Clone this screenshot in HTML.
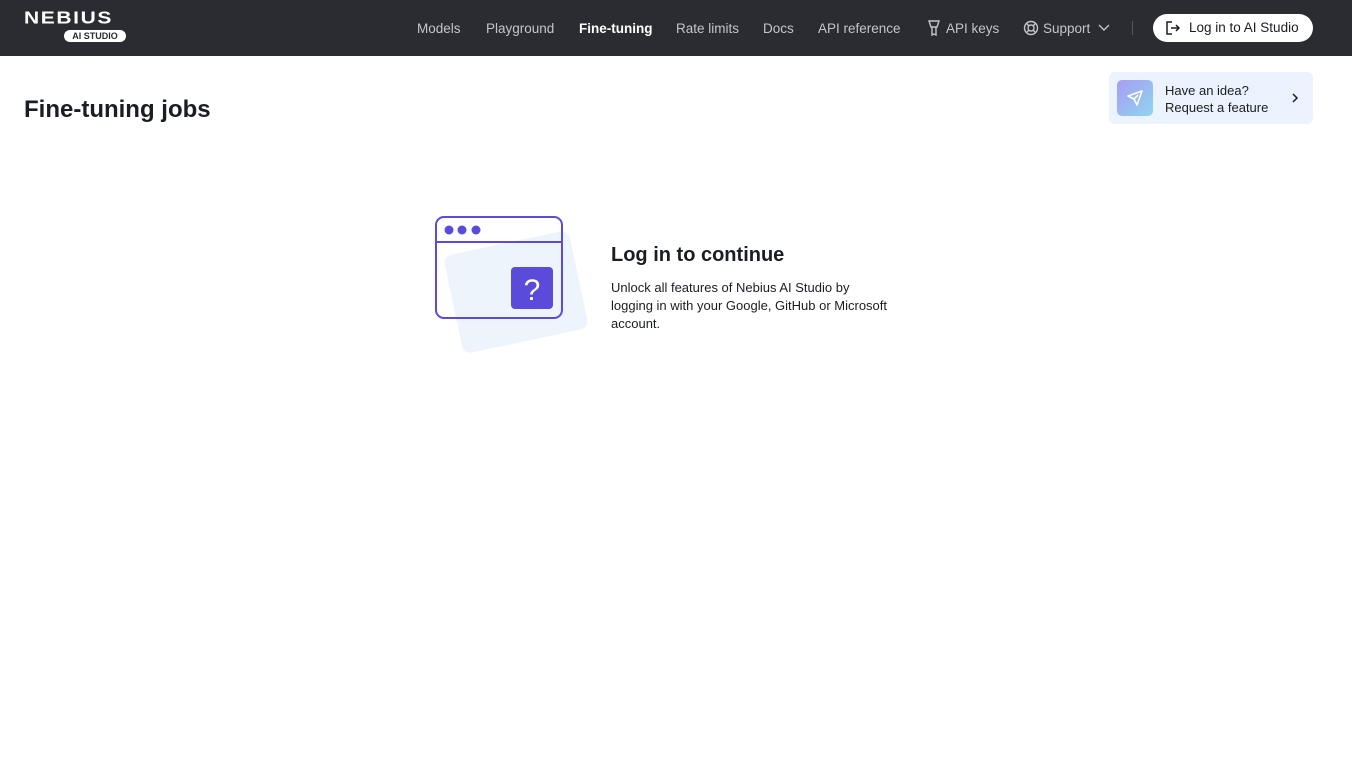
<!DOCTYPE html>
<html><head><meta charset="utf-8"><style>
*{margin:0;padding:0;box-sizing:border-box}
body{width:1352px;height:760px;background:#fff;font-family:"Liberation Sans",sans-serif;position:relative;overflow:hidden;color:#1b1d24}
.top{position:absolute;left:0;top:0;width:1352px;height:56px;background:#2b2c31}
.nav{position:absolute;top:21px;font-size:13.5px;color:#c4c5ca;white-space:nowrap}
.nav.a{color:#fff;font-weight:bold}
.btn{position:absolute;left:1153px;top:14px;width:160px;height:28px;background:#fff;border-radius:14px;font-size:13.5px;color:#1b1d24}
h1{position:absolute;left:24px;top:96px;font-size:24px;font-weight:bold;color:#1b1d24}
.card{position:absolute;left:1109px;top:72px;width:204px;height:52px;background:#eaf3fe;border-radius:6px}
</style></head><body>
<div class="top">
<div style="position:absolute;left:24px;top:11px;color:#fff;font-weight:bold;font-size:21px;letter-spacing:1.6px;line-height:18px;transform:scaleY(0.82);transform-origin:top left">NEBIUS</div>
<div style="position:absolute;left:64px;top:30px;width:62px;height:12px;background:#fff;border-radius:6px;color:#2b2c31;font-size:9px;font-weight:bold;text-align:center;line-height:12px">AI STUDIO</div>
<div class="nav" style="left:417px">Models</div>
<div class="nav" style="left:486px">Playground</div>
<div class="nav a" style="left:579px">Fine-tuning</div>
<div class="nav" style="left:676px">Rate limits</div>
<div class="nav" style="left:763px">Docs</div>
<div class="nav" style="left:818px">API reference</div>
<svg style="position:absolute;left:927px;top:20px" width="14" height="16" viewBox="0 0 14 16" fill="none" stroke="#c4c5ca" stroke-width="1.4"><path d="M2 1h10l-2 6H4z M5 7v8l2-1 2 1V7"/></svg>
<div class="nav" style="left:946px">API keys</div>
<svg style="position:absolute;left:1023px;top:20px" width="16" height="16" viewBox="0 0 16 16" fill="none" stroke="#c4c5ca" stroke-width="1.4"><circle cx="8" cy="8" r="6.5"/><circle cx="8" cy="8" r="3"/><path d="M3.5 3.5l2.4 2.4M12.5 3.5l-2.4 2.4M3.5 12.5l2.4-2.4M12.5 12.5l-2.4-2.4"/></svg>
<div class="nav" style="left:1043px">Support</div>
<svg style="position:absolute;left:1098px;top:23px" width="12" height="10" viewBox="0 0 12 10" fill="none" stroke="#c4c5ca" stroke-width="1.4"><path d="M1 2l5 5 5-5"/></svg>
<div style="position:absolute;left:1132px;top:21px;width:1px;height:14px;background:#55565c"></div>
<div class="btn"><svg style="position:absolute;left:12px;top:6px" width="16" height="16" viewBox="0 0 16 16" fill="none" stroke="#1b1d24" stroke-width="1.5"><path d="M7 2H2v12h5M6 8h8M11 5l3 3-3 3"/></svg><span style="position:absolute;left:36px;top:6px">Log in to AI Studio</span></div>
</div>
<h1>Fine-tuning jobs</h1>
<div class="card">
<div style="position:absolute;left:8px;top:8px;width:36px;height:36px;border-radius:5px;background:linear-gradient(135deg,#a79cf5,#8fd6ee)"></div>
<svg style="position:absolute;left:17px;top:17px" width="18" height="18" viewBox="0 0 18 18" fill="none" stroke="#fff" stroke-width="1.6" stroke-linejoin="round"><path d="M16 2L2 7l6 3 3 6z M8 10l4-4"/></svg>
<div style="position:absolute;left:56px;top:10px;font-size:13px;line-height:17px;color:#1b1d24">Have an idea?<br>Request a feature</div>
<svg style="position:absolute;left:182px;top:20px" width="8" height="12" viewBox="0 0 8 12" fill="none" stroke="#1b1d24" stroke-width="1.5"><path d="M2 2l4 4-4 4"/></svg>
</div>
<svg style="position:absolute;left:430px;top:210px" width="170" height="150" viewBox="0 0 170 150">
<rect x="22" y="32" width="128" height="100" rx="8" fill="#eef4fc" transform="rotate(-12 86 82)"/>
<rect x="6" y="7" width="126" height="101" rx="8" fill="none" stroke="#5b4bdb" stroke-width="2"/>
<line x1="6" y1="32" x2="132" y2="32" stroke="#5b4bdb" stroke-width="2"/>
<circle cx="19" cy="20" r="4.5" fill="#5b4bdb"/><circle cx="32" cy="20" r="4.5" fill="#5b4bdb"/><circle cx="46" cy="20" r="4.5" fill="#5b4bdb"/>
<rect x="81" y="57" width="42" height="42" rx="4" fill="#5b4bdb"/>
<text x="102" y="90" fill="#fff" font-size="30" text-anchor="middle" font-family="Liberation Sans">?</text>
</svg>
<div style="position:absolute;left:611px;top:244px;font-size:20px;font-weight:bold">Log in to continue</div>
<div style="position:absolute;left:611px;top:279px;width:320px;font-size:13px;line-height:18px;color:#1b1d24;white-space:nowrap">Unlock all features of Nebius AI Studio by<br>logging in with your Google, GitHub or Microsoft<br>account.</div>
</body></html>
